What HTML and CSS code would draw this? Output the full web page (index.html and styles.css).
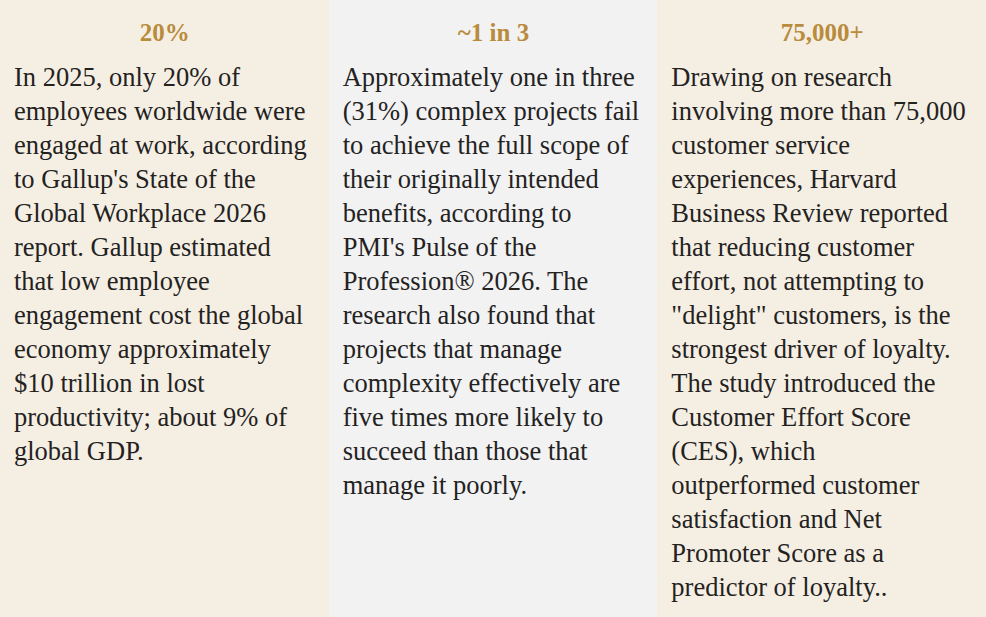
FILE: index.html
```html
<!DOCTYPE html>
<html lang="en">
<head>
<meta charset="utf-8">
<title>Stats</title>
<link rel="stylesheet" href="styles.css">
</head>
<body>
<main class="stats">
  <section class="stat stat-warm">
    <h2 class="stat-value">20%</h2>
    <p class="stat-text">In 2025, only 20% of employees worldwide were engaged at work, according to Gallup's State of the Global Workplace 2026 report. Gallup estimated that low employee engagement cost the global economy approximately $10 trillion in lost productivity; about 9% of global GDP.</p>
  </section>
  <section class="stat stat-cool">
    <h2 class="stat-value">~1 in 3</h2>
    <p class="stat-text">Approximately one in three<br>(31%) complex projects fail<br>to achieve the full scope of<br>their originally intended<br>benefits, according to<br>PMI's Pulse of the<br>Profession® 2026. The<br>research also found that<br>projects that manage<br>complexity effectively are<br>five times more likely to<br>succeed than those that<br>manage it poorly.</p>
  </section>
  <section class="stat stat-warm">
    <h2 class="stat-value">75,000+</h2>
    <p class="stat-text">Drawing on research<br>involving more than 75,000<br>customer service<br>experiences, Harvard<br>Business Review reported<br>that reducing customer<br>effort, not attempting to<br>"delight" customers, is the<br>strongest driver of loyalty.<br>The study introduced the<br>Customer Effort Score<br>(CES), which<br>outperformed customer<br>satisfaction and Net<br>Promoter Score as a<br>predictor of loyalty..</p>
  </section>
</main>
</body>
</html>
```
FILE: styles.css
```css
html, body {
  margin: 0;
  padding: 0;
}
body {
  font-family: "Liberation Serif", "Times New Roman", serif;
  color: #24221f;
  background: #ffffff;
}
.stats {
  display: grid;
  grid-template-columns: 1fr 1fr 1fr;
  min-height: 100vh;
}
.stat {
  padding: 16px 13px 0 14px;
}
.stat-warm {
  background: #f5efe3;
}
.stat-cool {
  background: #f2f2f2;
}
.stat-value {
  margin: 0 0 10px 0;
  text-align: center;
  font-size: 25px;
  line-height: 34px;
  font-weight: bold;
  color: #b98b3d;
}
.stat-text {
  margin: 0;
  font-size: 26.5px;
  line-height: 34px;
}
```
